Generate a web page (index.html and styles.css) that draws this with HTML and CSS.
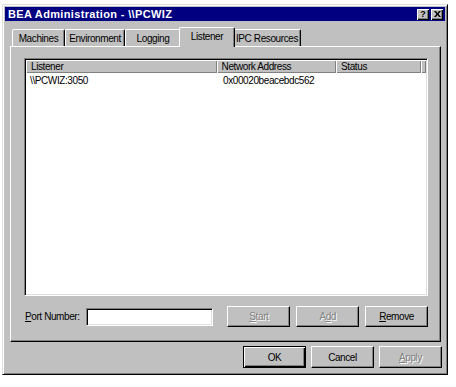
FILE: index.html
```html
<!DOCTYPE html>
<html>
<head>
<meta charset="utf-8">
<link rel="stylesheet" href="styles.css">
</head>
<body>
<div class="window">
  <div class="titlebar">
    <span class="title">BEA Administration - \\PCWIZ</span>
    <div class="tbtns">
      <span class="tbtn">?</span>
      <span class="tbtn close">
        <svg width="7" height="6" viewBox="0 0 7 6"><path d="M0 0h2l1.5 2 1.5-2h2l-2.5 3 2.5 3h-2l-1.5-2-1.5 2h-2l2.5-3z" fill="#000"/></svg>
      </span>
    </div>
  </div>
  <div class="tabs">
    <div class="tab t1">Machines</div>
    <div class="tab t2">Environment</div>
    <div class="tab t3 beforesel">Logging</div>
    <div class="tab t4 sel">Listener</div>
    <div class="tab t5">IPC Resources</div>
  </div>
  <div class="panel">
    <div class="listview">
      <div class="lvhead">
        <div class="hcell c1">Listener</div>
        <div class="hcell c2">Network Address</div>
        <div class="hcell c3">Status</div>
        <div class="hcell c4"></div>
      </div>
      <div class="lvrow">
        <div class="cell c1">\\PCWIZ:3050</div>
        <div class="cell c2">0x00020beacebdc562</div>
        <div class="cell c3"></div>
      </div>
    </div>
    <div class="portrow">
      <label class="plabel"><u>P</u>ort Number:</label>
      <div class="input"></div>
      <div class="btn dis"><u>S</u>tart</div>
      <div class="btn dis">A<u>d</u>d</div>
      <div class="btn"><u>R</u>emove</div>
    </div>
  </div>
  <div class="bottom">
    <div class="btn def">OK</div>
    <div class="btn">Cancel</div>
    <div class="btn dis"><u>A</u>pply</div>
  </div>
</div>
</body>
</html>
```

FILE: styles.css
```css
* { box-sizing: border-box; }
html, body { margin: 0; padding: 0; background: #fff; }
body {
  font-family: "Liberation Sans", Arial, sans-serif;
  font-size: 10px;
  letter-spacing: -0.4px;
  color: #000;
}

.window {
  margin: 4px 0 0 2px;
  width: 446px;
  height: 371px;
  background: #c0c0c0;
  border: 1px solid;
  border-color: #dfdfdf #000 #000 #dfdfdf;
  box-shadow: inset 1px 1px #fff, inset -1px -1px #808080;
  padding: 2px;
  display: flex;
  flex-direction: column;
}

.titlebar {
  height: 14px;
  background: #000080;
  color: #fff;
  display: flex;
  align-items: center;
  justify-content: space-between;
  padding: 0 2px 0 3px;
}
.title { font-weight: bold; font-size: 11px; letter-spacing: 0.35px; }
.tbtns { display: flex; gap: 2px; }
.tbtn {
  width: 12px; height: 11px;
  background: #c0c0c0;
  color: #000;
  font-weight: bold;
  font-size: 9px;
  letter-spacing: 0;
  display: flex; align-items: center; justify-content: center;
  box-shadow: inset 1px 1px #fff, inset -1px -1px #000, inset -2px -2px #808080;
  line-height: 1;
}

.tabs {
  margin: 6px 0 0 5px;
  height: 19px;
  display: flex;
  align-items: flex-end;
  position: relative;
  z-index: 1;
}
.tab {
  height: 17px;
  background: #c0c0c0;
  border-top: 1px solid #fff;
  border-left: 1px solid #fff;
  border-right: 1px solid #000;
  box-shadow: inset -1px 0 #808080;
  border-radius: 2px 2px 0 0;
  display: flex; align-items: center; justify-content: center;
  white-space: nowrap;
}
.t1 { width: 53px; margin-left: 2px; }
.t2 { width: 60px; }
.t3 { width: 56px; }
.t4 { width: 52px; }
.t5 { width: 68px; }
.tab.beforesel { border-right-color: #c0c0c0; box-shadow: none; }
.tab.sel {
  width: 56px;
  height: 20px;
  margin: 0 -2px -1px -2px;
  padding-bottom: 3px;
  position: relative;
  z-index: 2;
}

.panel {
  width: 431px;
  height: 296px;
  margin-left: 5px;
  border: 1px solid;
  border-color: #fff #000 #000 #fff;
  box-shadow: inset -1px -1px #808080;
  padding: 11px 12px 0 13px;
  display: flex;
  flex-direction: column;
}

.listview {
  width: 404px;
  height: 238px;
  background: #fff;
  border: 1px solid;
  border-color: #808080 #fff #fff #808080;
  box-shadow: inset 1px 1px #000, inset -1px -1px #dfdfdf;
  padding: 1px 1px 1px 1px;
}
.lvhead { display: flex; height: 13px; }
.hcell {
  height: 13px;
  background: #c0c0c0;
  box-shadow: inset 1px 1px #fff, inset -1px -1px #808080;
  padding: 0 0 0 5px;
  line-height: 13px;
  white-space: nowrap;
  overflow: hidden;
}
.c1 { width: 193px; }
.c2 { width: 121px; }
.c3 { width: 86px; }
.c4 { flex: 1; }
.lvrow { display: flex; height: 13px; margin-top: 1px; }
.cell { padding-left: 4px; line-height: 13px; white-space: nowrap; }

.portrow {
  display: flex;
  align-items: center;
  margin-top: 10px;
  height: 21px;
}
.plabel { width: 62px; white-space: nowrap; padding-left: 1px; }
.input {
  width: 128px;
  height: 18px;
  background: #fff;
  border: 1px solid;
  border-color: #808080 #fff #fff #808080;
  box-shadow: inset 1px 1px #000, inset -1px -1px #dfdfdf;
  margin-right: 14px;
}
.btn {
  width: 63px;
  height: 21px;
  background: #c0c0c0;
  border: 1px solid;
  border-color: #fff #000 #000 #fff;
  box-shadow: inset -1px -1px #808080;
  display: flex; align-items: center; justify-content: center;
  margin-right: 6px;
  white-space: nowrap;
}
.portrow .btn:last-child { margin-right: 0; }
.btn.dis { color: #808080; text-shadow: 1px 1px #fff; }
.btn.def {
  border: 1px solid #000;
  box-shadow: inset 1px 1px #fff, inset -1px -1px #000, inset -2px -2px #808080;
}

.bottom {
  display: flex;
  justify-content: flex-end;
  margin-top: 4px;
  padding-right: 3px;
}
.bottom .btn { height: 22px; margin-right: 0; margin-left: 5px; }
```
